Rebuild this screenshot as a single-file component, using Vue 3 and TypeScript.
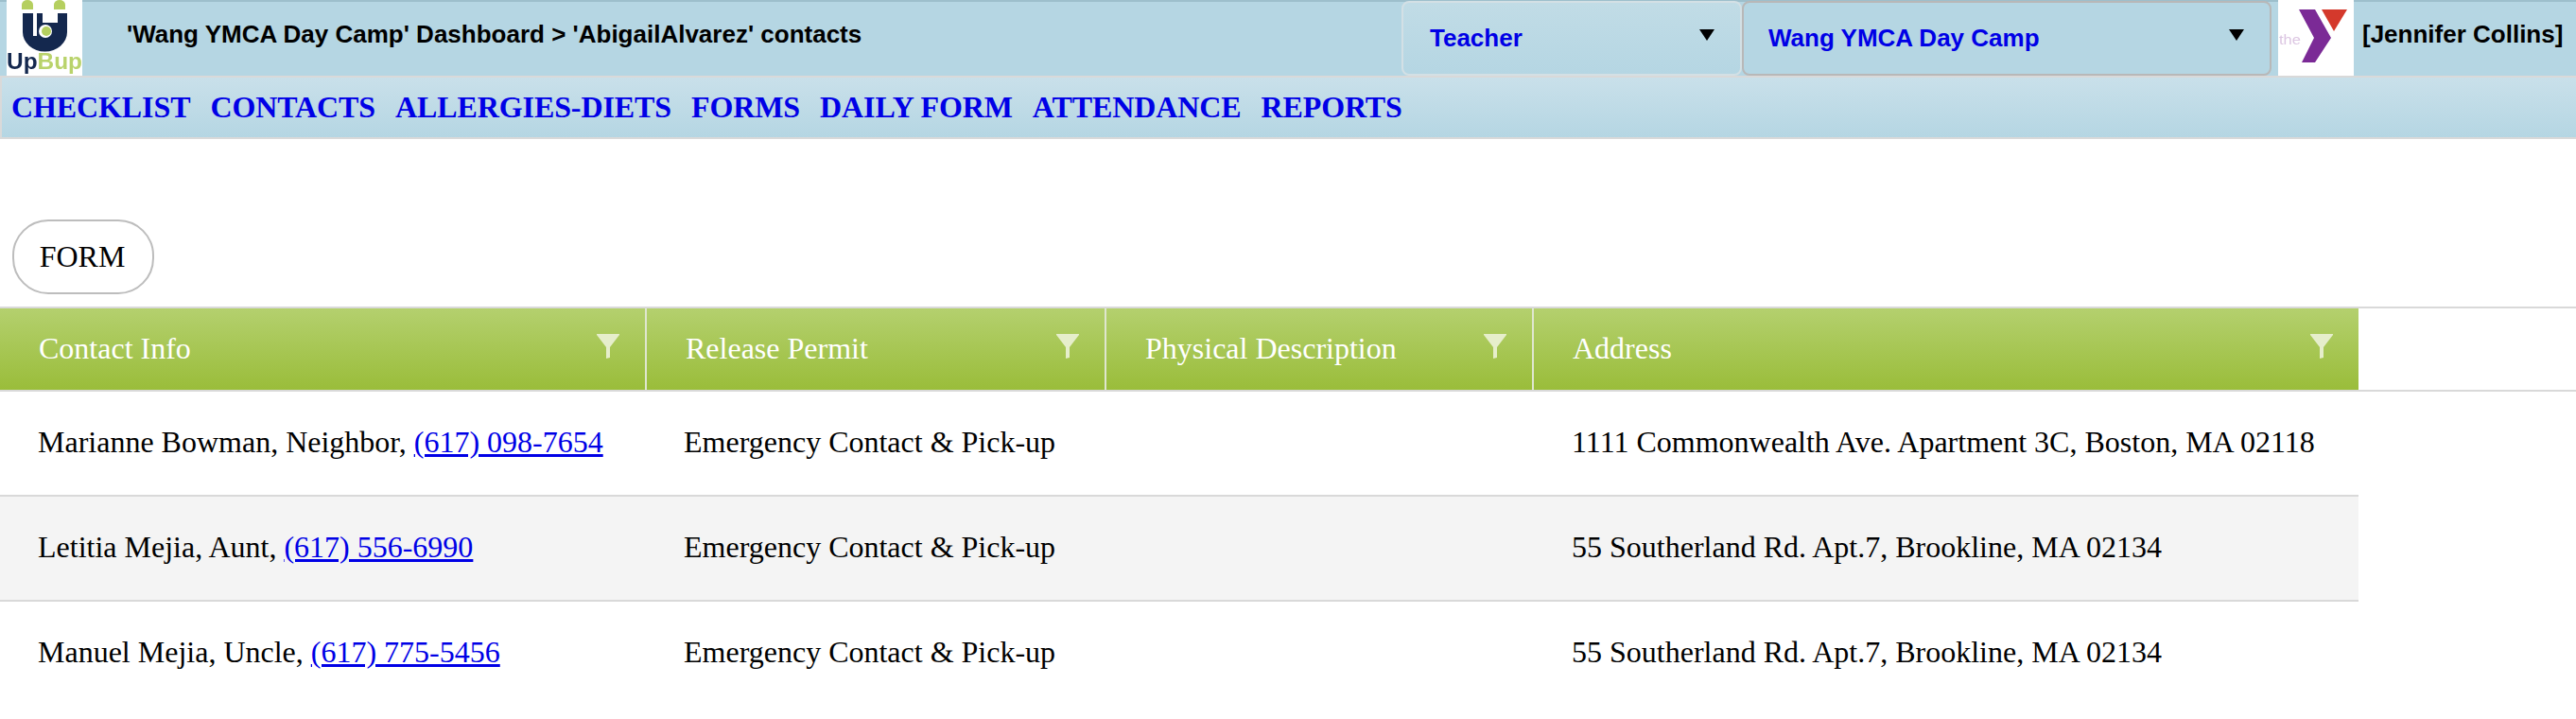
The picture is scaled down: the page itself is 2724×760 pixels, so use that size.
<script setup lang="ts">
const menu: string[] = ['CHECKLIST', 'CONTACTS', 'ALLERGIES-DIETS', 'FORMS', 'DAILY FORM', 'ATTENDANCE', 'REPORTS']

const columns = [
  { title: 'Contact Info', width: 684 },
  { title: 'Release Permit', width: 486 },
  { title: 'Physical Description', width: 452 },
  { title: 'Address', width: 872 },
]

const rows = [
  {
    contact: 'Marianne Bowman, Neighbor,',
    phone: '(617) 098-7654',
    permit: 'Emergency Contact & Pick-up',
    address: '1111 Commonwealth Ave. Apartment 3C, Boston, MA 02118',
  },
  {
    contact: 'Letitia Mejia, Aunt,',
    phone: '(617) 556-6990',
    permit: 'Emergency Contact & Pick-up',
    address: '55 Southerland Rd. Apt.7, Brookline, MA 02134',
  },
  {
    contact: 'Manuel Mejia, Uncle,',
    phone: '(617) 775-5456',
    permit: 'Emergency Contact & Pick-up',
    address: '55 Southerland Rd. Apt.7, Brookline, MA 02134',
  },
]
</script>

<template>
  <div class="page">
    <header class="topbar">
      <div class="logo">
        <svg class="blurry" viewBox="0 0 80 80" width="80" height="80">
          <path d="M16 10V5a6 5 0 0 1 12 0v5z" fill="#b5cf5f" />
          <path d="M50 10V5a6 5 0 0 1 12 0v5z" fill="#b5cf5f" />
          <path d="M17 14h47v20a23 20 0 0 1-47 0z" fill="#14284e" />
          <path d="M28 14h4v24h-4zM38 14h16v10H38z" fill="#fff" />
          <circle cx="41" cy="33" r="7" fill="#fff" />
          <circle cx="42" cy="33" r="5" fill="#b5cf5f" />
          <text x="0" y="73" class="logo-up" textLength="80" lengthAdjust="spacingAndGlyphs">Up<tspan fill="#b9d36b">Bup</tspan></text>
        </svg>
      </div>
      <div class="crumb">'Wang YMCA Day Camp' Dashboard &gt; 'AbigailAlvarez' contacts</div>
      <div class="select role"><span>Teacher</span><i class="caret" /></div>
      <div class="select camp"><span>Wang YMCA Day Camp</span><i class="caret" /></div>
      <div class="ymca">
        <svg class="blurry" viewBox="0 0 80 80" width="80" height="80">
          <path d="M46 10h27L59 33z" fill="#d4392c" />
          <path d="M22 10h17l17 30-17 26H25l13-26z" fill="#7b2a96" />
          <text x="1" y="47" class="ymca-the" textLength="23" lengthAdjust="spacingAndGlyphs">the</text>
        </svg>
      </div>
      <div class="user">[Jennifer Collins]</div>
    </header>

    <nav class="menu">
      <a v-for="item in menu" :key="item" class="menu-link">{{ item }}</a>
    </nav>

    <div class="actions">
      <button class="form-btn">FORM</button>
    </div>

    <div class="table">
      <div class="thead">
        <div v-for="col in columns" :key="col.title" class="th" :style="{ width: col.width + 'px' }">
          <span>{{ col.title }}</span>
          <svg class="funnel" viewBox="0 0 24 26" width="24" height="26">
            <path d="M0 0h24v1L14 14v11l-4 1V14L0 1z" fill="#e6eecb" />
          </svg>
        </div>
      </div>
      <div v-for="(row, i) in rows" :key="i" class="tr" :class="{ alt: i % 2 === 1 }">
        <div class="td" :style="{ width: columns[0].width + 'px' }">
          {{ row.contact }} <a class="phone">{{ row.phone }}</a>
        </div>
        <div class="td" :style="{ width: columns[1].width + 'px' }">{{ row.permit }}</div>
        <div class="td" :style="{ width: columns[2].width + 'px' }"></div>
        <div class="td" :style="{ width: columns[3].width + 'px' }">{{ row.address }}</div>
      </div>
    </div>
  </div>
</template>

<style scoped>
.page {
  width: 2724px;
  height: 760px;
  overflow: hidden;
  background: #fff;
  font-family: "Liberation Serif", serif;
  color: #000;
}

.topbar {
  display: flex;
  height: 80px;
  box-sizing: border-box;
  background: #b5d6e3;
  border-top: 2px solid #9dbfcc;
  font-family: "Liberation Sans", sans-serif;
  font-weight: 700;
}

.logo {
  width: 80px;
  height: 80px;
  margin: -2px 0 0 7px;
  background: #fff;
  overflow: hidden;
  flex: none;
}

.blurry {
  display: block;
  filter: blur(0.7px);
}

.logo-up {
  font: 700 24px "Liberation Sans", sans-serif;
  fill: #14284e;
}

.crumb {
  width: 1395px;
  padding: 19px 0 0 47px;
  box-sizing: border-box;
  font-size: 26px;
  flex: none;
}

.select {
  position: relative;
  box-sizing: border-box;
  height: 79px;
  margin-top: -1px;
  border-radius: 8px;
  color: #0000e6;
  font-size: 26px;
  line-height: 75px;
  flex: none;
}

.role {
  width: 360px;
  padding-left: 28px;
  border: 2px solid #d3e0e5;
  background: linear-gradient(#c1dce6, #b5d6e3);
}

.camp {
  width: 560px;
  padding-left: 26px;
  border: 2px solid #b8b8b8;
}

.caret {
  position: absolute;
  top: 28px;
  right: 27px;
  border-left: 8px solid transparent;
  border-right: 8px solid transparent;
  border-top: 12px solid #000;
}

.ymca {
  width: 80px;
  height: 80px;
  margin: -2px 0 0 7px;
  background: #fff;
  overflow: hidden;
  flex: none;
}

.ymca-the {
  font: 400 14px "Liberation Sans", sans-serif;
  fill: #dcc6e2;
}

.user {
  padding: 19px 0 0 9px;
  font-size: 26px;
  white-space: nowrap;
}

.menu {
  display: flex;
  gap: 21px;
  box-sizing: border-box;
  height: 67px;
  padding: 11px 0 0 10px;
  border: 2px solid #d9d9d9;
  border-width: 2px 0 2px 2px;
  background: linear-gradient(#c9e0ea, #b5d6e3);
}

.menu-link {
  color: #0000e6;
  font-size: 32px;
  font-weight: 700;
  line-height: 40px;
  letter-spacing: -0.1px;
}

.actions {
  height: 177px;
  padding: 85px 0 0 13px;
  box-sizing: border-box;
}

.form-btn {
  display: block;
  width: 150px;
  height: 79px;
  border: 2px solid #bdbdbd;
  border-radius: 38px;
  background: #fff;
  color: #000;
  font: 400 32px "Liberation Serif", serif;
  padding: 0 2px 0 0;
}

.thead {
  display: flex;
  border-top: 2px solid #d9d9d9;
  border-bottom: 2px solid #d9d9d9;
}

.th {
  position: relative;
  box-sizing: border-box;
  height: 86px;
  padding: 24px 0 0 41px;
  background: linear-gradient(#b4d06e, #9abd3a);
  border-right: 2px solid #dfe6cf;
  color: #fff;
  font-size: 32px;
  line-height: 36px;
  flex: none;
}

.th:last-child {
  border-right: none;
}

.funnel {
  position: absolute;
  top: 27px;
  right: 27px;
}

.tr {
  display: flex;
  width: 2494px;
  height: 111px;
  box-sizing: border-box;
  border-bottom: 2px solid #d9d9d9;
}

.tr:last-child {
  border-bottom: none;
}

.tr.alt {
  background: #f4f4f4;
}

.td {
  box-sizing: border-box;
  padding: 35px 0 0 40px;
  font-size: 32px;
  line-height: 36px;
  white-space: nowrap;
  flex: none;
}

.td:nth-child(2) {
  padding-left: 39px;
}

.phone {
  color: #0000e6;
  text-decoration: underline;
}
</style>

<style>
html,
body {
  margin: 0;
  background: #fff;
}
</style>
